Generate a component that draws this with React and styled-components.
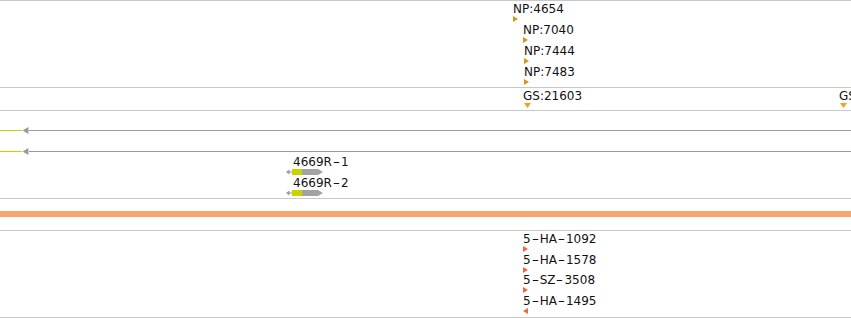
import React from 'react'
import styled, { createGlobalStyle } from 'styled-components'

const Global = createGlobalStyle`
    html, body { margin:0; padding:0; background:#fff; }
    body { overflow:hidden; font-family:"DejaVu Sans", sans-serif; }
`

const COLORS = {
    np: '#d4961c',
    gs: '#f0a21e',
    ha: '#f5663c',
}

const tracks = {
    np: [
        { label: 'NP:4654', x: 513, y: 1 },
        { label: 'NP:7040', x: 523, y: 22 },
        { label: 'NP:7444', x: 524, y: 43 },
        { label: 'NP:7483', x: 524, y: 64 },
    ],
    gs: [
        { label: 'GS:21603', x: 523, y: 1 },
        { label: 'GS:21604', x: 839, y: 1 },
    ],
    genes: [
        { label: '4669R-1', x: 286, y: 44 },
        { label: '4669R-2', x: 286, y: 65 },
    ],
    ha: [
        { label: '5-HA-1092', x: 523, y: 1, dir: 'right' },
        { label: '5-HA-1578', x: 523, y: 22, dir: 'right' },
        { label: '5-SZ-3508', x: 523, y: 42, dir: 'right' },
        { label: '5-HA-1495', x: 523, y: 63, dir: 'left' },
    ],
}

// hyphens are drawn wide in the track labels
const Text = ({ children }) => {
    const parts = children.split('-')
    return parts.map((p, i) => (
        <React.Fragment key={i}>
            {i > 0 && <Dash>-</Dash>}
            {p}
        </React.Fragment>
    ))
}

const Marker = ({ dir, color }) => {
    if (dir === 'down') {
        return (
            <svg width="7" height="5" viewBox="0 0 7 5"><polygon points="0,0 7,0 3.5,5" fill={color} /></svg>
        )
    }
    if (dir === 'left') {
        return (
            <svg width="5" height="6" viewBox="0 0 5 6"><polygon points="5,0 5,6 0,3" fill={color} /></svg>
        )
    }
    return (
        <svg width="5" height="6" viewBox="0 0 5 6"><polygon points="0,0 5,3 0,6" fill={color} /></svg>
    )
}

const GeneGlyph = () => (
    <svg width="38" height="6" viewBox="0 0 38 6">
        <polygon points="0,3 3.5,0.5 3.5,5.5" fill="#999" />
        <rect x="3" y="2.5" width="4" height="1" fill="#999" />
        <rect x="6" y="0" width="10" height="6" fill="#c8d400" />
        <polygon points="16,0 32,0 37,3 32,6 16,6" fill="#a3a3a3" />
    </svg>
)

export default function App() {
    return (
        <>
            <Global />
            <Browser>
                <Track $h={86}>
                    {tracks.np.map(f => (
                        <Feature key={f.label} $x={f.x} $y={f.y}>
                            <Label><Text>{f.label}</Text></Label>
                            <Marker dir="right" color={COLORS.np} />
                        </Feature>
                    ))}
                </Track>
                <Track $h={22}>
                    {tracks.gs.map(f => (
                        <Feature key={f.label} $x={f.x} $y={f.y}>
                            <Label><Text>{f.label}</Text></Label>
                            <Shift><Marker dir="down" color={COLORS.gs} /></Shift>
                        </Feature>
                    ))}
                </Track>
                <Track $h={87}>
                    <Transcript $y={16}>
                        <Utr />
                        <Arrow><Marker dir="left" color="#999" /></Arrow>
                        <Intron />
                    </Transcript>
                    <Transcript $y={37}>
                        <Utr />
                        <Arrow><Marker dir="left" color="#999" /></Arrow>
                        <Intron />
                    </Transcript>
                    {tracks.genes.map(f => (
                        <Feature key={f.label} $x={f.x} $y={f.y}>
                            <Label $indent={7}><Text>{f.label}</Text></Label>
                            <GeneGlyph />
                        </Feature>
                    ))}
                </Track>
                <Track $h={31}>
                    <Coverage />
                </Track>
                <Track $h={86}>
                    {tracks.ha.map(f => (
                        <Feature key={f.label} $x={f.x} $y={f.y}>
                            <Label><Text>{f.label}</Text></Label>
                            <Marker dir={f.dir} color={COLORS.ha} />
                        </Feature>
                    ))}
                </Track>
            </Browser>
        </>
    )
}

const Browser = styled.div`
    width:851px;
    height:318px;
    border-top:1px solid #c8c8c8;
    box-sizing:border-box;
    overflow:hidden;
`

const Track = styled.div`
    position:relative;
    height:${p => p.$h}px;
    border-bottom:1px solid #c8c8c8;
    overflow:hidden;
`

const Feature = styled.div`
    position:absolute;
    left:${p => p.$x}px;
    top:${p => p.$y}px;
    display:flex;
    flex-direction:column;
    align-items:flex-start;
    svg{ display:block; }
`

const Label = styled.div`
    font-family:"DejaVu Sans", sans-serif;
    font-size:12px;
    line-height:14px;
    color:#111;
    white-space:nowrap;
    margin-left:${p => p.$indent || 0}px;
`

const Dash = styled.span`
    display:inline-block;
    width:9px;
    text-align:center;
    transform:scaleX(1.7);
`

const Shift = styled.div`
    margin-left:1px;
`

const Transcript = styled.div`
    position:absolute;
    left:0;
    right:0;
    top:${p => p.$y}px;
    height:7px;
    display:flex;
    align-items:center;
`

const Utr = styled.div`
    width:22px;
    height:1px;
    background:#c8d400;
`

const Arrow = styled.div`
    width:7px;
    svg{ display:block; width:7px; height:7px; }
`

const Intron = styled.div`
    flex:1;
    height:1px;
    background:#9a9a9a;
`

const Coverage = styled.div`
    margin-top:12px;
    height:6px;
    background:#f9a46e;
`
